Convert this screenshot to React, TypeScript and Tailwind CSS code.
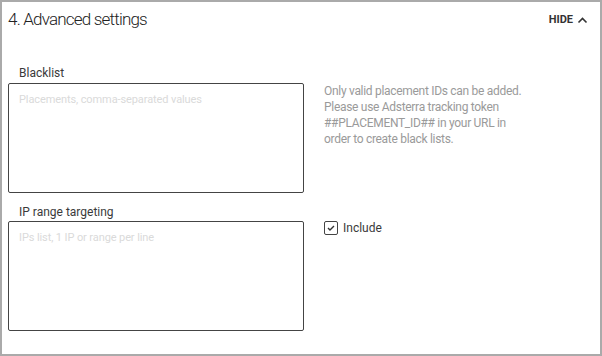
import React from "react";

export default function App() {
  return (
    <div
      className="w-[602px] h-[356px] border-2 border-[#aaaaaa] bg-white text-[#333]"
      style={{ fontFamily: "Roboto, 'Open Sans', sans-serif" }}
    >
      <div className="flex h-[36px] items-center justify-between pl-[6px] pr-[12px]">
        <div className="text-[17px] font-light tracking-[-0.8px] text-[#222]">4. Advanced settings</div>
        <div className="flex items-center gap-[4px] text-[11px] font-bold text-[#333]">
          <span>HIDE</span>
          <svg width="11" height="8" viewBox="0 0 11 8" fill="none">
            <path d="M1.5 6.5 L5.5 2.5 L9.5 6.5" stroke="#333" strokeWidth="1.6" />
          </svg>
        </div>
      </div>
      <div className="flex flex-col gap-[12px] pl-[6px] pt-[28px]">
        <div className="flex gap-[20px]">
          <div className="flex w-[296px] flex-col gap-[3px]">
            <div className="pl-[11px] text-[12px] leading-[14px] text-[#3a3a3a]">Blacklist</div>
            <div className="h-[110px] rounded-[2px] border border-[#444] px-[10px] pt-[9px] text-[11px] leading-[14px] tracking-[-0.1px] text-[#dadada]">
              Placements, comma-separated values
            </div>
          </div>
          <div className="pt-[17px] text-[12px] leading-[16px] tracking-[-0.3px] text-[#9a9a9a]">
            Only valid placement IDs can be added.
            <br />
            Please use Adsterra tracking token
            <br />
            ##PLACEMENT_ID## in your URL in
            <br />
            order to create black lists.
          </div>
        </div>
        <div className="flex gap-[20px]">
          <div className="flex w-[296px] flex-col gap-[2px]">
            <div className="pl-[11px] text-[12px] leading-[14px] text-[#3a3a3a]">IP range targeting</div>
            <div className="h-[110px] rounded-[2px] border border-[#444] px-[10px] pt-[9px] text-[11px] leading-[14px] tracking-[-0.1px] text-[#dadada]">
              IPs list, 1 IP or range per line
            </div>
          </div>
          <div className="flex items-center gap-[5px] pt-[16px] self-start">
            <div className="flex h-[14px] w-[14px] items-center justify-center rounded-[2px] border border-[#444]">
              <svg width="8" height="6" viewBox="0 0 8 6" fill="none">
                <path d="M1 3 L3 5 L7 1" stroke="#333" strokeWidth="1.4" />
              </svg>
            </div>
            <span className="text-[12px] leading-[14px] text-[#3a3a3a]">Include</span>
          </div>
        </div>
      </div>
    </div>
  );
}
